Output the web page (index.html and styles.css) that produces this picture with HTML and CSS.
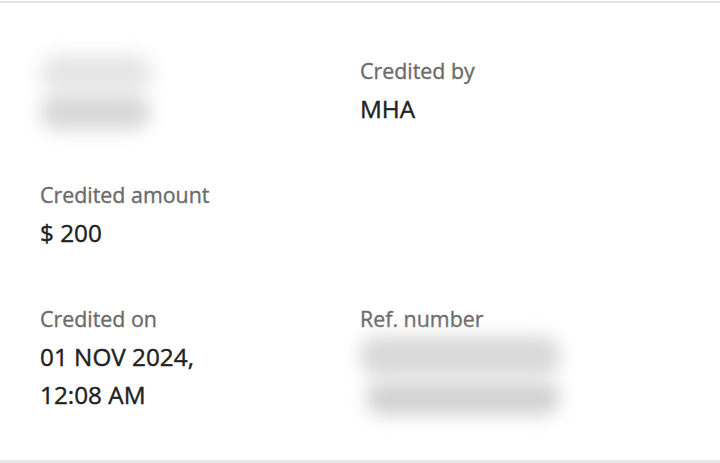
FILE: index.html
```html
<!DOCTYPE html>
<html lang="en">
<head>
  <meta charset="UTF-8">
  <meta name="viewport" content="width=device-width, initial-scale=1.0">
  <title>Credit details</title>
  <link rel="stylesheet" href="styles.css">
</head>
<body>
  <div class="card">
    <div class="details">
      <div class="item">
        <div class="label"><span class="smudge smudge-a"></span></div>
        <div class="value"><span class="smudge smudge-b"></span></div>
      </div>
      <div class="item">
        <div class="label">Credited by</div>
        <div class="value">MHA</div>
      </div>

      <div class="item">
        <div class="label">Credited amount</div>
        <div class="value">$ 200</div>
      </div>
      <div class="item"></div>

      <div class="item">
        <div class="label">Credited on</div>
        <div class="value">01 NOV 2024,<br>12:08 AM</div>
      </div>
      <div class="item">
        <div class="label">Ref. number</div>
        <div class="value">
          <span class="smudge smudge-c"></span><br>
          <span class="smudge smudge-d"></span>
        </div>
      </div>
    </div>
  </div>
</body>
</html>
```

FILE: styles.css
```css
body {
  margin: 0;
  background-color: #ffffff;
  font-family: "Open Sans", "Noto Sans", sans-serif;
}
.card {
  margin-top: 1px;
  border-top: 2px solid #e3e6e6;
  border-bottom: 3px solid #e4e8e8;
  height: 462px;
  box-sizing: border-box;
  overflow: hidden;
}
.details {
  display: grid;
  grid-template-columns: 320px 1fr;
  row-gap: 48px;
  padding: 49px 0 0 40px;
}
.label {
  font-size: 21.4px;
  line-height: 38px;
  color: #6b6b6b;
  height: 38px;
  -webkit-text-stroke: 0.35px #6b6b6b;
}
.value {
  font-size: 24.3px;
  line-height: 38px;
  color: #222222;
  min-height: 38px;
  -webkit-text-stroke: 0.4px #222222;
}
.smudge {
  display: inline-block;
  vertical-align: middle;
  margin: -8px 0;
  background-color: #d4d4d4;
  border-radius: 18px;
  filter: blur(9px);
}
.smudge-a {
  width: 112px;
  height: 36px;
  background-color: #e6e6e6;
}
.smudge-b {
  width: 110px;
  height: 36px;
  background-color: #d8d8d8;
}
.smudge-c {
  width: 200px;
  height: 40px;
  background-color: #d9d9d9;
  transform: translateY(-4px);
}
.smudge-d {
  width: 194px;
  height: 34px;
  margin-left: 6px;
  background-color: #d2d2d2;
}
```
